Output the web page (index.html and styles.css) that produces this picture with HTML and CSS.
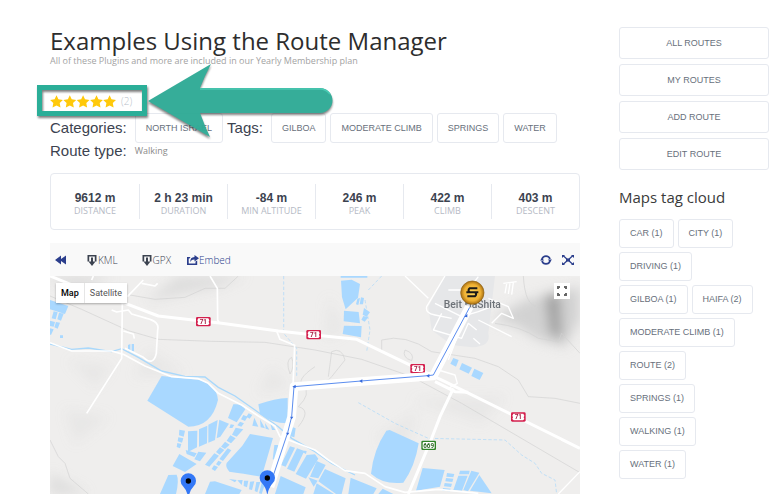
FILE: index.html
```html
<!DOCTYPE html>
<html lang="en">
<head>
    <meta charset="UTF-8">
    <meta name="viewport" content="width=device-width, initial-scale=1.0">
    <title>Examples Using the Route Manager</title>
    <link rel="stylesheet" href="styles.css">
</head>
<body>

<div class="page">
    <main class="content">
        <header class="title">
            <h1>Examples Using the Route Manager</h1>
            <p>All of these Plugins and more are included in our Yearly Membership plan</p>
        </header>

        <!-- Rating -->
        <div class="rating">
            <svg class="stars" viewBox="0 0 66 13" role="img" aria-label="5 stars">
                <defs>
                    <path id="star" d="M6.5 .2 8.4 4.2 12.900 4.900 9.700 8 10.500 12.500 6.5 10.400 2.500 12.500 3.300 8 .1 4.900 4.600 4.200Z"/>
                </defs>
                <use href="#star"/>
                <use href="#star" x="13.3"/>
                <use href="#star" x="26.6"/>
                <use href="#star" x="40"/>
                <use href="#star" x="53.1"/>
            </svg>
            <span>(2)</span>
            <div class="highlight"></div>
            <svg class="arrow" viewBox="0 0 190 84" aria-hidden="true">
                <path fill="#30ab96" d="M2 39 65 2 Q59 13 54 26 H174 A12.500 12.500 0 0 1 174 51 H54 Q58 62 64 75Z"/>
                <path fill="none" stroke="#45c9b1" stroke-width="1.500" d="M54 27H174Q180 27 184 32"/>
            </svg>
        </div>

        <!-- Taxonomy -->
        <div class="meta">
            <span class="meta-label">Categories:</span>
            <a class="tag" href="#">North Israel</a>
            <span class="meta-label">Tags:</span>
            <a class="tag" href="#">Gilboa</a>
            <a class="tag" href="#">Moderate Climb</a>
            <a class="tag" href="#">Springs</a>
            <a class="tag" href="#">Water</a>
        </div>
        <div class="meta route-type">
            <span class="meta-label">Route type:</span>
            <span class="meta-value">Walking</span>
        </div>

        <!-- Route numbers -->
        <dl class="stats">
            <div><dd>9612 m</dd><dt>Distance</dt></div>
            <div><dd>2 h 23 min</dd><dt>Duration</dt></div>
            <div><dd>-84 m</dd><dt>Min Altitude</dt></div>
            <div><dd>246 m</dd><dt>Peak</dt></div>
            <div><dd>422 m</dd><dt>Climb</dt></div>
            <div><dd>403 m</dd><dt>Descent</dt></div>
        </dl>

        <div class="toolbar">
            <a class="tool back" href="#" aria-label="Back"><svg viewBox="0 0 12 12"><path d="M0 6 6 1.500V5L11 1.500V10.500L6 7V10.500Z"/></svg></a>
            <a class="tool file" href="#"><svg viewBox="0 0 12 12"><path d="M1.500 1H10.500V7.500H8.800V2.600H3.200V7.500H1.500Z"/><path d="M5 3.500H7V7.500H9.500L6 12 2.500 7.500H5Z"/></svg>KML</a>
            <a class="tool file" href="#"><svg viewBox="0 0 12 12"><path d="M1.500 1H10.500V7.500H8.800V2.600H3.200V7.500H1.500Z"/><path d="M5 3.500H7V7.500H9.500L6 12 2.500 7.500H5Z"/></svg>GPX</a>
            <a class="tool embed" href="#"><svg viewBox="0 0 12 12"><path d="M0 3H3.500L2.500 4.600H1.700V9.400H8.500V7.500L10.200 6.400V11H0Z"/><path d="M7.500 1 12 4.300 7.500 7.500V5.600Q4.500 5.400 3.300 8 3 3.200 7.500 3Z"/></svg>Embed</a>
            <a class="tool refresh" href="#" aria-label="Reload"><svg viewBox="0 0 12 12"><path d="M2 5A4.200 4.200 0 0 1 10 5M10 7A4.200 4.200 0 0 1 2 7" fill="none" stroke="currentColor" stroke-width="1.700"/><path d="M0 6.500 2 4 4.200 6.500ZM12 5.500 10 8 7.800 5.500Z"/></svg></a>
            <a class="tool" href="#" aria-label="Full width"><svg viewBox="0 0 12 12"><path d="M1 1.500 11 10.500M11 1.500 1 10.500" stroke="currentColor" stroke-width="1.200"/><path d="M0 1H3L0 4ZM12 1V4L9 1ZM0 11V8L3 11ZM12 11H9L12 8ZM4 4.500H8V7.500H4Z"/></svg></a>
        </div>

        <!-- Map -->
        <div class="map">
            <svg class="map-canvas" viewBox="15 18 1590 654" preserveAspectRatio="xMinYMin slice">
                <defs>
                    <filter id="soft" x="-50%" y="-50%" width="200%" height="200%"><feGaussianBlur stdDeviation="18"/></filter>
                    <radialGradient id="gold">
                        <stop offset="0" stop-color="#ffd75c"/>
                        <stop offset=".7" stop-color="#eeb033"/>
                        <stop offset="1" stop-color="#a87013"/>
                    </radialGradient>
                    <g id="pin">
                        <path fill="#3478f6" d="M0 52Q-4 28-16 16A23 23 0 1 1 16 16Q4 28 0 52Z"/>
                        <circle r="8"/>
                    </g>
                    <g id="shield71">
                        <rect x="-22" y="-14" width="44" height="28" rx="4" fill="#d41f4d"/>
                        <path fill="#fff" d="M-15-10H15L18-4Q14 0 18 6L14 10H-14L-18 6Q-14 0-18-4Z"/>
                        <text y="7" class="road-no">71</text>
                    </g>
                </defs>
                <rect x="15" y="18" width="1590" height="654" fill="#efeeed"/>

                <!-- hills -->
                <g filter="url(#soft)" fill="#d2d2d2">
                    <path d="M15 18H200L110 60 40 45ZM300 95 520 50 600 18H400ZM15 610 130 672H15Z" opacity=".6"/>
                    <path d="M70 270 200 290 150 350ZM270 320 310 240 420 310ZM680 290 735 350 640 370ZM60 420 190 440 90 520ZM850 80 900 180 840 210ZM1100 390 1380 380 1310 460ZM1000 500 1120 420 1060 590Z" opacity=".25"/>
                    <path d="M1340 150 1440 90 1605 50V150L1560 230 1480 210 1410 165Z"/>
                    <path d="M1500 75 1545 70 1550 210 1515 190Z" fill="#a0a0a0"/>
                </g>
                <path fill="#e6e7e9" d="M1200 18H1350L1330 190Q1340 230 1280 232L1220 225 1160 180 1150 110Z"/>

                <!-- contour lines and rail -->
                <g fill="none" stroke="#d2d2d2" stroke-width="2">
                    <path d="M15 78 110 118 250 182 340 208 500 214 660 217 810 240 950 268 1100 320 1250 400 1605 608"/>
                    <path d="M255 75 330 88 420 82 480 55 540 55 580 18M15 510 40 560 60 580 75 625 130 672"/>
                    <path d="M810 290Q750 330 775 350T760 410Q800 420 760 470M740 262Q720 270 735 312 750 290 740 262"/>
                    <path d="M795 340 850 330 860 320 900 270Q890 230 860 245L850 320M1010 245V210Q1080 190 1160 245L1290 265 1360 290 1420 330 1450 380 1530 385 1605 400M1435 18Q1440 110 1480 110M1350 160Q1430 170 1480 205L1540 215 1550 190 1605 250M1080 240Q1110 250 1100 272 1070 262 1080 240"/>
                </g>

                <!-- water -->
                <g fill="none" stroke="#a9d8fb" stroke-width="4">
                    <path d="M15 222 80 238 130 234 200 245 230 236 280 262 350 303 420 319 480 321 520 352 570 378 630 420 700 470 740 505 810 545 860 580 930 615"/>
                    <path d="M716 18V190L755 235V320M960 90 975 180 965 245M1010 18 970 60M940 398 1050 460 1150 505 1290 508 1380 510 1430 555 1470 580 1490 610 1530 630 1535 672" stroke-width="2" stroke-dasharray="10 6"/>
                </g>
                <g fill="#a9d8ff">
                    <path d="M15 90 70 108 60 132 15 118ZM26 124 38 127 32 148 20 145ZM42 128 56 131 48 152 37 148ZM15 152 30 156 26 170 15 168ZM33 156 45 158 38 176 28 172ZM15 175 26 178 18 195 12 192ZM45 196H54V204H45ZM249 225 256 222V244H249ZM260 222H267V244H260Z"/>
                    <path d="M350 318 465 330Q515 345 519 390 500 470 430 470L307 392Z"/>
                    <path d="M565 403Q590 400 601 418L575 457 549 444ZM640 403Q690 385 728 384V460Q680 460 645 432Z"/>
                    <path d="M403 479 420 482 416 500 402 496ZM400 502 415 505 411 518 398 514ZM397 519 409 522 405 535 395 531Z"/>
                    <path d="M429 484 457 482 456 532 429 546ZM462 478 487 467 486 520 462 530ZM490 464 518 450 510 510 490 518ZM523 449 552 461 526 500 515 505ZM557 463 568 465 562 474 553 474Z"/>
                    <path d="M422 540 455 550 448 561 425 552ZM460 545 484 548 465 574 448 568ZM403 552 455 582 420 606 383 588Z"/>
                    <path d="M595 435 608 440 600 453 588 448ZM611 430 622 435 614 446 604 440ZM585 455 597 460 589 470 577 466ZM572 473 595 478 575 500 561 494ZM556 496 572 505 558 520 545 512ZM540 515 554 524 540 537 528 530ZM525 532 538 540 524 554 513 546ZM508 550 522 557 493 590 480 584ZM548 535 559 541 534 573 523 567ZM520 572 530 577 522 588 513 583ZM507 586 519 591 510 603 500 597Z"/>
                    <path d="M628 443 640 470 622 467ZM645 448 660 475 647 472ZM660 459 673 479 662 476ZM676 461 692 480 681 480Z"/>
                    <path d="M615 492 684 504 650 620Q590 610 553 605 540 590 545 579L592 527Z"/>
                    <path d="M370 615 395 614Q403 630 393 672H345ZM495 635 510 634 590 660 583 672H480Z"/>
                    <path d="M552 627 575 630 570 637ZM577 631 593 630 590 645ZM597 632 610 632 606 652 596 648ZM615 635 628 634 621 660 612 658ZM634 636 646 636 637 667 629 663ZM650 638 661 640 650 672 642 670Z"/>
                    <path d="M688 525 700 525 695 570 683 568ZM740 470 752 475 748 502 734 498ZM735 529 750 533 722 590 708 585ZM756 535 778 543 748 605 726 596ZM760 540 785 543 783 552ZM785 555 810 553 820 566 783 626 752 612ZM707 618 782 652 775 672H690ZM790 622 818 632 806 650Z"/>
                </g>
                <g transform="translate(795)" fill="#a9d8ff">
                    <path d="M93 32 125 29 150 42 144 83 107 118 96 82ZM92 18H172V23H92ZM142 86 150 84 145 105 138 103ZM153 82 162 84 159 103 149 103ZM102 122 146 126 150 160 101 154ZM102 167 155 168 153 202 98 192ZM162 114 180 127 170 140 158 134ZM160 138 175 142 164 155 154 149Z"/>
                    <path d="M430 264 446 270 438 290 421 281ZM456 279 486 293 476 311 448 298ZM493 296 520 309 509 330 484 318Z"/>
                    <path d="M239 480 326 520Q315 590 280 638 220 645 183 611 190 540 229 482ZM338 594 404 600 390 650 318 662Z"/>
                    <path d="M0 555 20 563 0 598ZM20 573 47 585 25 625 0 620ZM45 597 107 625 95 672H78L25 634ZM20 640 72 672H10ZM122 623 200 655 190 672H115ZM218 656 250 672H205Z"/>
                    <path d="M411 609 433 612 430 622 409 620ZM408 624 430 626 427 636 406 634ZM404 639 426 641 423 651 402 649ZM399 654 422 656 420 664 397 662ZM450 602 479 602 477 613 447 613ZM445 617 473 617 456 662 430 660ZM484 602 508 608 474 664 460 660ZM508 615 545 670 480 662Z"/>
                </g>

                <!-- roads -->
                <g fill="none" stroke="#fff" stroke-linejoin="round">
                    <path stroke-width="9" d="M15 18 130 65 235 98 340 138 450 151 530 160 700 183 830 197 935 208 1105 290 1200 335 1605 535"/>
                    <path stroke-width="9" d="M1225 355 1185 440 1160 505 1090 672"/>
                    <path stroke-width="5" d="M232 98 230 265 125 430M15 218 80 243 200 243 235 253 300 288 380 320 460 326 490 340 520 370 590 405 640 438 690 468 705 500 810 540 850 570 900 602 960 610 1020 650 1080 667 1180 658 1300 670M247 80 295 30M290 40 330 48 338 40M495 18 517 55 518 150 524 160M200 120 215 126 250 120 260 132 305 145Q345 155 338 180L334 250Q325 290 295 262L240 235M235 183 265 192 268 206M695 183 705 208 749 226 744 350M145 18 140 30"/>
                    <path stroke-width="4" d="M1080 18 1150 85M1200 18 1145 110Q1140 130 1170 135L1220 145M1190 130 1165 180 1250 205 1270 160 1295 180M1170 100 1250 140 1300 125 1340 110M1210 60 1270 60 1300 20M1330 85 1390 110 1405 145 1370 130 1340 160M1235 205 1210 270M1285 205 1305 222M1300 150 1400 200M1180 300 1230 315 1237 340 1210 355M1375 40 1415 35M1385 42 1380 70M1395 40 1390 72M1405 38 1400 74M1605 605 1540 672"/>
                    <path stroke-width="9" d="M1170 335 1230 365 1270 367"/>
                </g>

                <use href="#shield71" x="475" y="155"/>
                <use href="#shield71" x="806" y="194"/>
                <use href="#shield71" x="1118" y="296"/>
                <use href="#shield71" x="1420" y="441"/>
                <g transform="translate(1151 526)">
                    <rect x="-22" y="-14" width="44" height="28" rx="4" fill="#2f8328"/>
                    <rect x="-18" y="-10" width="36" height="20" rx="3" fill="#fff"/>
                    <text y="7" class="road-no green">669</text>
                </g>
                <text x="1282" y="113" class="place">Beit HaShita</text>

                <!-- recorded route -->
                <path d="M675 650 740 440 747 350 1165 318 1273 110" fill="none" stroke="#fff" stroke-width="26" stroke-linejoin="round"/>
                <path d="M672 655 728 488 740 440 747 350 948 333 1149 317 1165 315 1274 112" fill="none" stroke="#5b8def" stroke-width="3"/>
                <path d="M742 350 752 344V355ZM735 440H745L740 448ZM723 488H733L728 496ZM943 333 952 328V339ZM1144 317 1153 312V323ZM1258 140 1267 131 1267 142Z" fill="#3569dc"/>
                <g transform="translate(1282 68)">
                    <circle r="35" fill="url(#gold)" stroke="#8f6013" stroke-width="2"/>
                    <path d="M15-13H-8Q-15-7-8-1H8Q15 5 8 11H-15M-18-1H-8M8-1H18" fill="none" stroke="#1b1a18" stroke-width="6"/>
                </g>
                <use href="#pin" x="430" y="633"/>
                <use href="#pin" x="667" y="624"/>
            </svg>
            <div class="map-type">
                <button type="button" class="active">Map</button>
                <button type="button">Satellite</button>
            </div>
            <button type="button" class="fullscreen" aria-label="Full screen"><svg viewBox="0 0 12 12"><path d="M2 4V2H4M8 2H10V4M10 8V10H8M4 10H2V8"/></svg></button>
        </div>
    </main>

    <aside class="sidebar">
        <nav class="route-links">
            <a href="#">All Routes</a>
            <a href="#">My Routes</a>
            <a href="#">Add Route</a>
            <a href="#">Edit Route</a>
        </nav>
        <h2>Maps tag cloud</h2>
        <div class="tag-cloud">
            <a class="tag" href="#">Car (1)</a>
            <a class="tag" href="#">City (1)</a>
            <a class="tag" href="#">Driving (1)</a>
            <a class="tag" href="#">Gilboa (1)</a>
            <a class="tag" href="#">Haifa (2)</a>
            <a class="tag" href="#">Moderate Climb (1)</a>
            <a class="tag" href="#">Route (2)</a>
            <a class="tag" href="#">Springs (1)</a>
            <a class="tag" href="#">Walking (1)</a>
            <a class="tag" href="#">Water (1)</a>
        </div>
    </aside>
</div>

</body>
</html>
```
FILE: styles.css
```css
* {
    box-sizing: border-box;
}
body {
    margin: 0;
    background-color: #fff;
    color: #3c4350;
    font-family: "Liberation Sans", Arial, sans-serif;
}
a {
    color: inherit;
    text-decoration: none;
}
.page {
    display: grid;
    grid-template-columns: 1fr 150px;
    gap: 39px;
    min-height: 100vh;
    padding: 27px 12px 0 50px;
}
.content {
    display: flex;
    flex-direction: column;
    min-width: 0;
}
.title h1 {
    margin: 0;
    color: #2d2d2d;
    font: 400 24px/28px "Open Sans", sans-serif;
}
.title p {
    margin: 0;
    color: #a3a3a3;
    font: 400 9px/12px "Open Sans", sans-serif;
}

/* Rating and the callout that points at it */
.rating {
    position: relative;
    display: flex;
    align-items: center;
    gap: 5px;
    height: 14px;
    margin-top: 27px;
    color: #b9bfca;
    font: 300 10px/14px "Open Sans", sans-serif;
}
.stars {
    width: 66px;
    height: 13px;
    fill: #ffc90a;
}
.highlight {
    position: absolute;
    top: -9px;
    left: -13px;
    width: 110px;
    height: 31px;
    border: 5px solid #2bae98;
    filter: drop-shadow(1px 2px 1px rgba(0, 0, 0, 0.5));
}
.arrow {
    position: absolute;
    top: -32px;
    left: 96px;
    z-index: 1;
    width: 190px;
    height: 84px;
    opacity: 0.97;
    filter: drop-shadow(0 2px 1px rgba(0, 0, 0, 0.5));
}

.meta {
    display: flex;
    align-items: center;
    gap: 4px;
    margin-top: 5px;
}
.meta-label {
    margin-right: 4px;
    font-size: 15px;
    line-height: 16px;
}
.route-type {
    margin-top: 0;
}
.meta-value {
    color: #8a8a8a;
    font: 400 9px/16px "Open Sans", sans-serif;
}
.tag {
    padding: 0 10px;
    border: 1px solid #e6e9ef;
    border-radius: 3px;
    color: #68707c;
    font-size: 9px;
    line-height: 28px;
    text-transform: uppercase;
    white-space: nowrap;
}

.stats {
    display: grid;
    grid-template-columns: repeat(6, 1fr);
    margin: 14px 0 13px;
    padding: 10px 0;
    border: 1px solid #e6e9ef;
    border-radius: 4px;
    text-align: center;
}
.stats div {
    padding: 8px 0 2px;
}
.stats div + div {
    border-left: 1px solid #e6e9ef;
}
.stats dd {
    margin: 0;
    font-size: 12px;
    font-weight: bold;
    line-height: 13px;
}
.stats dt {
    color: #b5bac5;
    font: 400 9px/12px "Open Sans", sans-serif;
    text-transform: uppercase;
}

.toolbar {
    display: flex;
    align-items: center;
    height: 33px;
    padding: 0 6px 0 5px;
    background-color: #f9f9f9;
    color: #2b3e8c;
    font: 300 10px/16px "Open Sans", sans-serif;
}
.tool {
    display: flex;
    align-items: center;
}
.tool svg {
    width: 12px;
    height: 12px;
    fill: currentColor;
}
.back {
    margin-right: 19px;
}
.file {
    margin-right: 23px;
    color: #3c4350;
}
.file + .file {
    margin-right: 16px;
}
.refresh {
    margin: 0 10px 0 auto;
}

.map {
    position: relative;
    flex: 1;
    min-height: 218px;
    overflow: hidden;
}
.map-canvas {
    position: absolute;
    width: 100%;
    height: 100%;
}
.road-no {
    fill: #a51b40;
    font: bold 19px Roboto, sans-serif;
    text-anchor: middle;
}
.road-no.green {
    fill: #2f6a28;
}
.place {
    fill: #6d7278;
    font: 500 31px Roboto, sans-serif;
    text-anchor: middle;
}
.map-type {
    position: absolute;
    top: 7px;
    left: 6px;
    display: flex;
    box-shadow: 0 1px 2px rgba(0, 0, 0, 0.3);
}
.map-type button {
    height: 20px;
    padding: 0 5px;
    border: none;
    background-color: #fff;
    color: #565656;
    font: 400 9px Roboto, sans-serif;
}
.map-type button + button {
    border-left: 1px solid #e6e6e6;
}
.map-type .active {
    color: #000;
    font-weight: 500;
}
.fullscreen {
    position: absolute;
    top: 7px;
    right: 10px;
    width: 16px;
    height: 16px;
    padding: 2px;
    border: none;
    background-color: #fff;
}
.fullscreen svg {
    display: block;
    fill: none;
    stroke: #666;
    stroke-width: 2;
}

.route-links {
    display: grid;
    gap: 5px;
}
.route-links a {
    border: 1px solid #e6e9ef;
    border-radius: 3px;
    color: #68707c;
    font-size: 9px;
    line-height: 30px;
    text-align: center;
    text-transform: uppercase;
}
.sidebar h2 {
    margin: 17px 0 12px;
    color: #3a3a3a;
    font: 400 15px/20px "Open Sans", sans-serif;
}
.tag-cloud {
    display: flex;
    flex-wrap: wrap;
    gap: 4px;
    padding-right: 10px;
}
.tag-cloud .tag {
    line-height: 27px;
}
```
